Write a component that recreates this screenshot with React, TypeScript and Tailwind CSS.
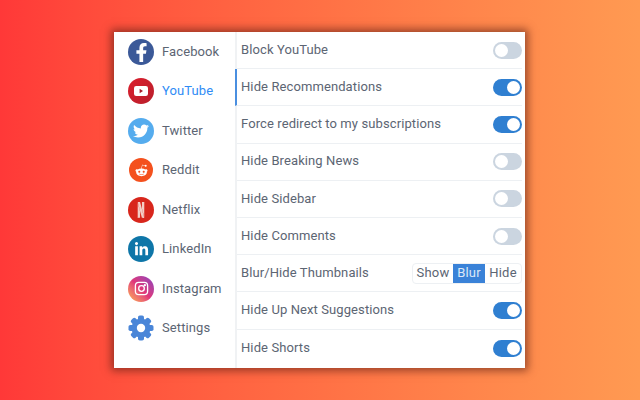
import { FaFacebookF, FaTwitter, FaRedditAlien, FaLinkedinIn } from 'react-icons/fa';
import { SiNetflix } from 'react-icons/si';
import type { ReactNode } from 'react';

const font = { fontFamily: 'Roboto, sans-serif' };

function Toggle({ on }: { on: boolean }) {
  return (
    <div
      className={
        on
          ? 'flex h-[17px] w-[29px] items-center justify-end rounded-full bg-[#2f7fd1] pr-[2px]'
          : 'flex h-[17px] w-[29px] items-center justify-start rounded-full bg-[#cbd5e0] pl-[2px]'
      }
    >
      <div className="h-[13px] w-[13px] rounded-full bg-white" />
    </div>
  );
}

function NavItem({ icon, label, active }: { icon: ReactNode; label: string; active?: boolean }) {
  return (
    <div className="flex h-[39.5px] items-center gap-[8px] pl-[14px]">
      {icon}
      <span className={active ? 'pb-[1px] text-[13px] tracking-[0.1px] text-[#2f8cf5]' : 'pb-[1px] text-[13px] tracking-[0.1px] text-[#5c6573]'}>{label}</span>
    </div>
  );
}

function Circle({ className, children }: { className: string; children: ReactNode }) {
  return <div className={`flex h-[26px] w-[26px] items-center justify-center rounded-full ${className}`}>{children}</div>;
}

function Gear() {
  const teeth = [0, 45, 90, 135];
  return (
    <svg width="26" height="26" viewBox="0 0 26 26" fill="#4a86d8">
      {teeth.map((a) => (
        <rect key={a} x="10" y="0.5" width="6" height="25" rx="1.8" transform={`rotate(${a} 13 13)`} />
      ))}
      <circle cx="13" cy="13" r="9.5" />
      <circle cx="13" cy="13" r="4.2" fill="#fff" />
    </svg>
  );
}

function Row({ label, active, children, last }: { label: string; active?: boolean; children: ReactNode; last?: boolean }) {
  return (
    <div
      className={
        (last ? 'border-b-0 ' : 'border-b border-[#edf0f3] ') +
        (active ? '-ml-[2px] border-l-2 border-l-[#4a8fe0] ' : '') +
        'flex h-[37.2px] items-center justify-between pl-[4px]'
      }
    >
      <span className="pb-[1px] text-[13px] tracking-[0.1px] text-[#5c6573]">{label}</span>
      {children}
    </div>
  );
}

export default function App() {
  return (
    <div
      className="h-[400px] w-[640px] bg-gradient-to-r from-[#ff3838] to-[#ff9a52] pl-[114px] pt-[32px]"
      style={font}
    >
      <div className="flex h-[336px] w-[411px] bg-white shadow-[0_0_8px_3px_rgba(90,30,20,0.6)]">
        <div className="w-[121px]">
          <NavItem
            label="Facebook"
            icon={<Circle className="bg-[#3b5998]"><FaFacebookF className="mt-[2px] h-[19px] w-[19px] text-white" /></Circle>}
          />
          <NavItem
            active
            label="YouTube"
            icon={
              <Circle className="bg-gradient-to-br from-[#dc1f2e] to-[#b81f2b]">
                <svg width="14" height="10" viewBox="0 0 14 10">
                  <rect width="14" height="10" rx="2.2" fill="#fff" />
                  <path d="M5.6 2.8 L9 5 L5.6 7.2 Z" fill="#a81c28" />
                </svg>
              </Circle>
            }
          />
          <NavItem
            label="Twitter"
            icon={<Circle className="bg-[#55acee]"><FaTwitter className="h-[16px] w-[16px] text-white" /></Circle>}
          />
          <NavItem
            label="Reddit"
            icon={
              <div className="flex w-[26px] justify-center">
                <div className="flex h-[24px] w-[24px] items-center justify-center rounded-full bg-[#f4511e]">
                  <FaRedditAlien className="h-[13px] w-[13px] text-white" />
                </div>
              </div>
            }
          />
          <NavItem
            label="Netflix"
            icon={<Circle className="bg-[#d8261c]"><SiNetflix className="h-[16px] w-[16px] scale-x-75 text-[#f3cdc6]" /></Circle>}
          />
          <NavItem
            label="LinkedIn"
            icon={<Circle className="bg-[#0e76a8]"><FaLinkedinIn className="h-[15px] w-[15px] text-white" /></Circle>}
          />
          <NavItem
            label="Instagram"
            icon={
              <Circle className="bg-gradient-to-bl from-[#8a3ac0] via-[#e0357a] to-[#fcb045]">
                <svg width="15" height="15" viewBox="0 0 16 16" fill="none" stroke="#fff" strokeWidth="1.4">
                  <rect x="1.5" y="1.5" width="13" height="13" rx="3.5" />
                  <circle cx="8" cy="8" r="3" />
                  <circle cx="11.6" cy="4.4" r="0.5" fill="#fff" />
                </svg>
              </Circle>
            }
          />
          <NavItem label="Settings" icon={<Gear />} />
        </div>
        <div className="flex-1 border-l-2 border-[#f0f2f4] pr-[3px]">
          <Row label="Block YouTube"><Toggle on={false} /></Row>
          <Row label="Hide Recommendations" active><Toggle on /></Row>
          <Row label="Force redirect to my subscriptions"><Toggle on /></Row>
          <Row label="Hide Breaking News"><Toggle on={false} /></Row>
          <Row label="Hide Sidebar"><Toggle on={false} /></Row>
          <Row label="Hide Comments"><Toggle on={false} /></Row>
          <Row label="Blur/Hide Thumbnails">
            <div className="flex h-[21px] w-[110px] items-stretch rounded-[4px] border border-[#edf0f3] text-[13px] tracking-[0.2px] text-[#5c6573]">
              <div className="flex w-[40px] items-center justify-center">Show</div>
              <div className="flex w-[32px] items-center justify-center bg-[#3a82d8] text-[#dce8f7]">Blur</div>
              <div className="flex flex-1 items-center justify-center">Hide</div>
            </div>
          </Row>
          <Row label="Hide Up Next Suggestions"><Toggle on /></Row>
          <Row label="Hide Shorts" last><Toggle on /></Row>
        </div>
      </div>
    </div>
  );
}
